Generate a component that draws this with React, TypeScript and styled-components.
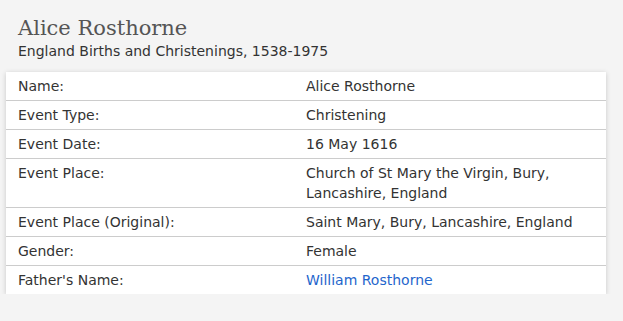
import styled, { createGlobalStyle } from 'styled-components'

const GlobalStyle = createGlobalStyle`
  html, body {
    margin: 0;
    padding: 0;
    background: #f4f4f4;
  }
`

const Page = styled.div`
  padding: 15px 17px 0 6px;
  font-family: "DejaVu Sans", Verdana, sans-serif;
  color: #333;
`

const Header = styled.header`
  padding-left: 12px;
  margin-bottom: 11px;
`

const Title = styled.h1`
  margin: 0;
  font-family: "DejaVu Serif", Georgia, serif;
  font-weight: normal;
  font-size: 21px;
  line-height: 26px;
  color: #555;
`

const Subtitle = styled.div`
  font-size: 14px;
  line-height: 20px;
  color: #333;
`

const Card = styled.table`
  width: 600px;
  border-collapse: collapse;
  background: #fff;
  box-shadow: 0 1px 5px rgba(0, 0, 0, 0.18);
  font-size: 14px;
  line-height: 20px;
`

const Row = styled.tr`
  & + & td {
    border-top: 1px solid #ccc;
  }
`

const Label = styled.td`
  width: 264px;
  padding: 4px 12px;
  vertical-align: top;
`

const Value = styled.td`
  padding: 4px 12px;
  vertical-align: top;
`

const Link = styled.a`
  color: #1f66cc;
  text-decoration: none;
`

const rows: [string, string, boolean?][] = [
  ['Name:', 'Alice Rosthorne'],
  ['Event Type:', 'Christening'],
  ['Event Date:', '16 May 1616'],
  ['Event Place:', 'Church of St Mary the Virgin, Bury, Lancashire, England'],
  ['Event Place (Original):', 'Saint Mary, Bury, Lancashire, England'],
  ['Gender:', 'Female'],
  ["Father's Name:", 'William Rosthorne', true],
]

export default function App() {
  return (
    <>
      <GlobalStyle />
      <Page>
        <Header>
          <Title>Alice Rosthorne</Title>
          <Subtitle>England Births and Christenings, 1538-1975</Subtitle>
        </Header>
        <Card>
          <tbody>
            {rows.map(([label, value, link]) => (
              <Row key={label}>
                <Label>{label}</Label>
                <Value>{link ? <Link href="#">{value}</Link> : value}</Value>
              </Row>
            ))}
          </tbody>
        </Card>
      </Page>
    </>
  )
}
